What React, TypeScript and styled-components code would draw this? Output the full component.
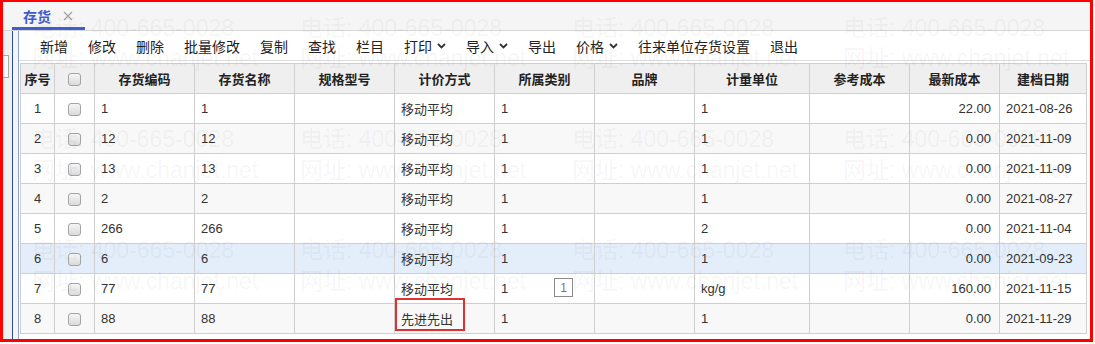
import React, { FC } from 'react';
import styled, { createGlobalStyle } from 'styled-components';

const GlobalStyle = createGlobalStyle`
  body {
    margin: 0;
    background: #fff;
    font-family: "Liberation Sans", "Noto Sans CJK SC", sans-serif;
    color: #333;
  }
`;

const Frame = styled.div`
  position: relative;
  width: 1093px;
  height: 342px;
  box-sizing: border-box;
  border: 3px solid #f00;
  border-top-width: 2px;
  display: flex;
  flex-direction: column;
  overflow: hidden;
  background: #fff;
`;

const TabBar = styled.div`
  height: 28px;
  flex: none;
  background: #f5f5f5;
  border-bottom: 1px solid #d6d6d6;
  padding-left: 9px;
  display: flex;
`;

const Tab = styled.div`
  width: 73px;
  box-sizing: border-box;
  border-bottom: 3px solid #3f5fcf;
  padding: 2px 0 0 11px;
  display: flex;
  align-items: center;
  gap: 12px;
`;

const TabTitle = styled.span`
  font-size: 14px;
  font-weight: bold;
  color: #3d5ccc;
`;

const Body = styled.div`
  flex: 1;
  display: flex;
  min-height: 0;
`;

const LeftRail = styled.div`
  width: 9px;
  flex: none;
  background: #f0f0f0;
`;

const Stub = styled.div`
  margin-top: 24px;
  width: 5px;
  height: 21px;
  border: 1px solid #a8a8a8;
  border-left: none;
  background: #f8f8f8;
`;

const Panel = styled.div`
  flex: 1;
  display: flex;
  border-left: 1px solid #2b4f9e;
`;

const Gutter = styled.div`
  width: 5px;
  flex: none;
  background: #f3f5fa;
  border-right: 1px solid #8ea4d0;
`;

const Content = styled.div`
  flex: 1;
  display: flex;
  flex-direction: column;
  background: #fff;
`;

const Toolbar = styled.div`
  height: 29px;
  flex: none;
  border-bottom: 1px solid #dcdcdc;
  padding-left: 21px;
  display: flex;
  align-items: center;
  gap: 20px;
  font-size: 14px;
  color: #222;
`;

const ToolItem = styled.span`
  display: inline-flex;
  align-items: center;
  gap: 5px;
  white-space: nowrap;
`;

const TableWrap = styled.div`
  padding: 2px 0 0 1px;
`;

const Grid = styled.table`
  width: 1066px;
  table-layout: fixed;
  border-collapse: collapse;
  font-size: 13px;
`;

const Th = styled.th`
  height: 29px;
  padding: 0;
  background: #efefef;
  border: 1px solid #cfcfcf;
  font-weight: bold;
  color: #222;
  text-align: center;
`;

const Row = styled.tr<{ $stripe: boolean; $selected: boolean }>`
  background: ${(p) => (p.$selected ? '#e4eefb' : p.$stripe ? '#f8f8f8' : '#fff')};
`;

const Td = styled.td<{ $align: 'left' | 'center' | 'right' }>`
  height: 29px;
  padding: ${(p) => (p.$align === 'right' ? '0 8px 0 0' : p.$align === 'left' ? '0 0 0 6px' : '0')};
  border: 1px solid #cfcfcf;
  text-align: ${(p) => p.$align};
  color: #333;
  white-space: nowrap;
  overflow: visible;
`;

const CellBox = styled.div`
  position: relative;
`;

const Check = styled.span`
  display: inline-block;
  vertical-align: middle;
  width: 11px;
  height: 11px;
  border: 1px solid #a3a3a3;
  border-radius: 3px;
  background: linear-gradient(#f6f6f6, #dadada);
`;

const EditBadge = styled.span`
  position: absolute;
  left: 53px;
  top: -3px;
  width: 17px;
  height: 17px;
  border: 1px solid #8a8a8a;
  background: #fff;
  color: #777;
  font-size: 12px;
  display: flex;
  align-items: center;
  justify-content: center;
`;

const Highlight = styled.span`
  position: absolute;
  left: -6px;
  top: -11px;
  width: 66px;
  height: 29px;
  border: 2.5px solid #e0302f;
  pointer-events: none;
`;

const Watermark = styled.span<{ $x: number; $y: number }>`
  position: absolute;
  left: ${(p) => p.$x - 3}px;
  top: ${(p) => p.$y - 2}px;
  font-size: 23px;
  line-height: 1;
  white-space: nowrap;
  color: rgba(0, 0, 0, 0.05);
  pointer-events: none;
`;

const Chevron: FC = () => (
  <svg width="9" height="6" viewBox="0 0 9 6">
    <polyline points="1,1 4.5,4.5 8,1" fill="none" stroke="#333" strokeWidth="1.8" />
  </svg>
);

const CloseIcon: FC = () => (
  <svg width="10" height="10" viewBox="0 0 10 10">
    <path d="M1 1 L9 9 M9 1 L1 9" stroke="#a0a0a0" strokeWidth="1.2" />
  </svg>
);

const tools: { label: string; menu?: boolean }[] = [
  { label: '新增' },
  { label: '修改' },
  { label: '删除' },
  { label: '批量修改' },
  { label: '复制' },
  { label: '查找' },
  { label: '栏目' },
  { label: '打印', menu: true },
  { label: '导入', menu: true },
  { label: '导出' },
  { label: '价格', menu: true },
  { label: '往来单位存货设置' },
  { label: '退出' },
];

const columns: { title: string; width: number }[] = [
  { title: '序号', width: 34 },
  { title: '', width: 40 },
  { title: '存货编码', width: 100 },
  { title: '存货名称', width: 100 },
  { title: '规格型号', width: 100 },
  { title: '计价方式', width: 100 },
  { title: '所属类别', width: 100 },
  { title: '品牌', width: 100 },
  { title: '计量单位', width: 115 },
  { title: '参考成本', width: 100 },
  { title: '最新成本', width: 90 },
  { title: '建档日期', width: 87 },
];

const rows = [
  { code: '1', name: '1', method: '移动平均', cat: '1', unit: '1', cost: '22.00', date: '2021-08-26' },
  { code: '12', name: '12', method: '移动平均', cat: '1', unit: '1', cost: '0.00', date: '2021-11-09' },
  { code: '13', name: '13', method: '移动平均', cat: '1', unit: '1', cost: '0.00', date: '2021-11-09' },
  { code: '2', name: '2', method: '移动平均', cat: '1', unit: '1', cost: '0.00', date: '2021-08-27' },
  { code: '266', name: '266', method: '移动平均', cat: '1', unit: '2', cost: '0.00', date: '2021-11-04' },
  { code: '6', name: '6', method: '移动平均', cat: '1', unit: '1', cost: '0.00', date: '2021-09-23' },
  { code: '77', name: '77', method: '移动平均', cat: '1', unit: 'kg/g', cost: '160.00', date: '2021-11-15' },
  { code: '88', name: '88', method: '先进先出', cat: '1', unit: '1', cost: '0.00', date: '2021-11-29' },
];

const markX = [32, 300, 572, 843];
const marks: { x: number; y: number; text: string }[] = [];
[17, 128, 239].forEach((y) => markX.forEach((x) => marks.push({ x, y, text: '电话: 400-665-0028' })));
[47, 159, 270].forEach((y) => markX.forEach((x) => marks.push({ x, y, text: '网址: www.chanjet.net' })));

const App: FC = () => {
  return (
    <>
      <GlobalStyle />
      <Frame>
        <TabBar>
          <Tab>
            <TabTitle>存货</TabTitle>
            <CloseIcon />
          </Tab>
        </TabBar>
        <Body>
          <LeftRail>
            <Stub />
          </LeftRail>
          <Panel>
            <Gutter />
            <Content>
              <Toolbar>
                {tools.map((t) => (
                  <ToolItem key={t.label}>
                    {t.label}
                    {t.menu && <Chevron />}
                  </ToolItem>
                ))}
              </Toolbar>
              <TableWrap>
                <Grid>
                  <colgroup>
                    {columns.map((c, i) => (
                      <col key={i} style={{ width: c.width }} />
                    ))}
                  </colgroup>
                  <thead>
                    <tr>
                      {columns.map((c, i) => (
                        <Th key={i}>{i === 1 ? <Check /> : c.title}</Th>
                      ))}
                    </tr>
                  </thead>
                  <tbody>
                    {rows.map((r, i) => (
                      <Row key={i} $stripe={i % 2 === 1} $selected={i === 5}>
                        <Td $align="center">{i + 1}</Td>
                        <Td $align="center">
                          <Check />
                        </Td>
                        <Td $align="left">{r.code}</Td>
                        <Td $align="left">{r.name}</Td>
                        <Td $align="left" />
                        <Td $align="left">
                          <CellBox>
                            {r.method}
                            {i === 7 && <Highlight />}
                          </CellBox>
                        </Td>
                        <Td $align="left">
                          <CellBox>
                            {r.cat}
                            {i === 6 && <EditBadge>1</EditBadge>}
                          </CellBox>
                        </Td>
                        <Td $align="left" />
                        <Td $align="left">{r.unit}</Td>
                        <Td $align="left" />
                        <Td $align="right">{r.cost}</Td>
                        <Td $align="left">{r.date}</Td>
                      </Row>
                    ))}
                  </tbody>
                </Grid>
              </TableWrap>
            </Content>
          </Panel>
        </Body>
        {marks.map((m, i) => (
          <Watermark key={i} $x={m.x} $y={m.y}>
            {m.text}
          </Watermark>
        ))}
      </Frame>
    </>
  );
};

export default App;
